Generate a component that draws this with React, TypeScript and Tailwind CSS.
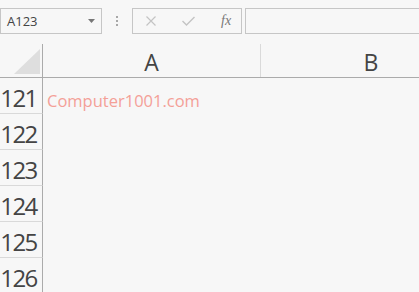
import React from "react";

const rows = [121, 122, 123, 124, 125, 126];

function Toolbar() {
  return (
    <div className="flex items-stretch pt-[8px] h-[34px] text-[#444]">
      {/* Name box */}
      <div className="w-[102px] shrink-0 h-[26px] border border-[#c6c6c6] flex items-center justify-between pl-[6px] pr-[6px]">
        <span className="text-[13px] leading-none">A123</span>
        <svg width="7" height="4" viewBox="0 0 7 4">
          <polygon points="0,0 7,0 3.5,4" fill="#777" />
        </svg>
      </div>

      {/* grip dots */}
      <div className="w-[30px] shrink-0 flex flex-col items-center justify-center gap-[2px]">
        <span className="block w-[2px] h-[2px] bg-[#a8a8a8]" />
        <span className="block w-[2px] h-[2px] bg-[#a8a8a8]" />
        <span className="block w-[2px] h-[2px] bg-[#a8a8a8]" />
      </div>

      {/* cancel / enter / fx */}
      <div className="w-[110px] shrink-0 h-[26px] border border-[#c6c6c6] flex items-center pl-[13px]">
        <svg width="10" height="10" viewBox="0 0 10 10">
          <path d="M0.5 0.5 L9.5 9.5 M9.5 0.5 L0.5 9.5" stroke="#c4c4c4" strokeWidth="1.2" fill="none" />
        </svg>
        <svg width="13" height="10" viewBox="0 0 13 10" className="ml-[26px]">
          <path d="M0.5 5 L4.5 9 L12.5 1" stroke="#c4c4c4" strokeWidth="1.4" fill="none" />
        </svg>
        <span className="ml-[26px] text-[14px] leading-none italic text-[#777] font-['Liberation_Serif',serif]">
          fx
        </span>
      </div>

      {/* formula input */}
      <div className="ml-[3px] w-[200px] shrink-0 h-[26px] border border-[#c6c6c6]" />
    </div>
  );
}

export default function App() {
  return (
    <div className="w-[419px] h-[292px] overflow-hidden bg-[#f7f7f7] font-['Open_Sans',sans-serif]">
      <Toolbar />

      {/* column header */}
      <div className="mt-[10px] flex h-[34px] border-b border-[#ababab] text-[#444]">
        <div className="w-[43px] shrink-0 border-r border-[#ababab] flex items-end justify-end pr-[2px] pb-[3px]">
          <svg width="26" height="25" viewBox="0 0 26 25">
            <polygon points="0,25 26,25 26,0" fill="#dedede" />
          </svg>
        </div>
        <div className="w-[218px] shrink-0 border-r border-[#dadada] flex items-end justify-center pb-[3px]">
          <span className="text-[23px] leading-none">A</span>
        </div>
        <div className="w-[220px] shrink-0 flex items-end justify-center pb-[3px]">
          <span className="text-[23px] leading-none">B</span>
        </div>
      </div>

      {/* rows */}
      {rows.map((n) => (
        <div key={n} className="flex h-[36px]">
          <div className="w-[43px] shrink-0 border-r border-r-[#ababab] border-b border-b-[#d9d9d9] flex items-end justify-center pb-[3px] pr-[5px]">
            <span className="text-[24px] leading-none tracking-[-1.5px] text-[#444]">{n}</span>
          </div>
          <div className="flex-1 flex items-end pl-[4px] pb-[5px]">
            {n === 121 && (
              <span className="text-[16.5px] leading-none text-[#f4a097]">Computer1001.com</span>
            )}
          </div>
        </div>
      ))}
    </div>
  );
}
